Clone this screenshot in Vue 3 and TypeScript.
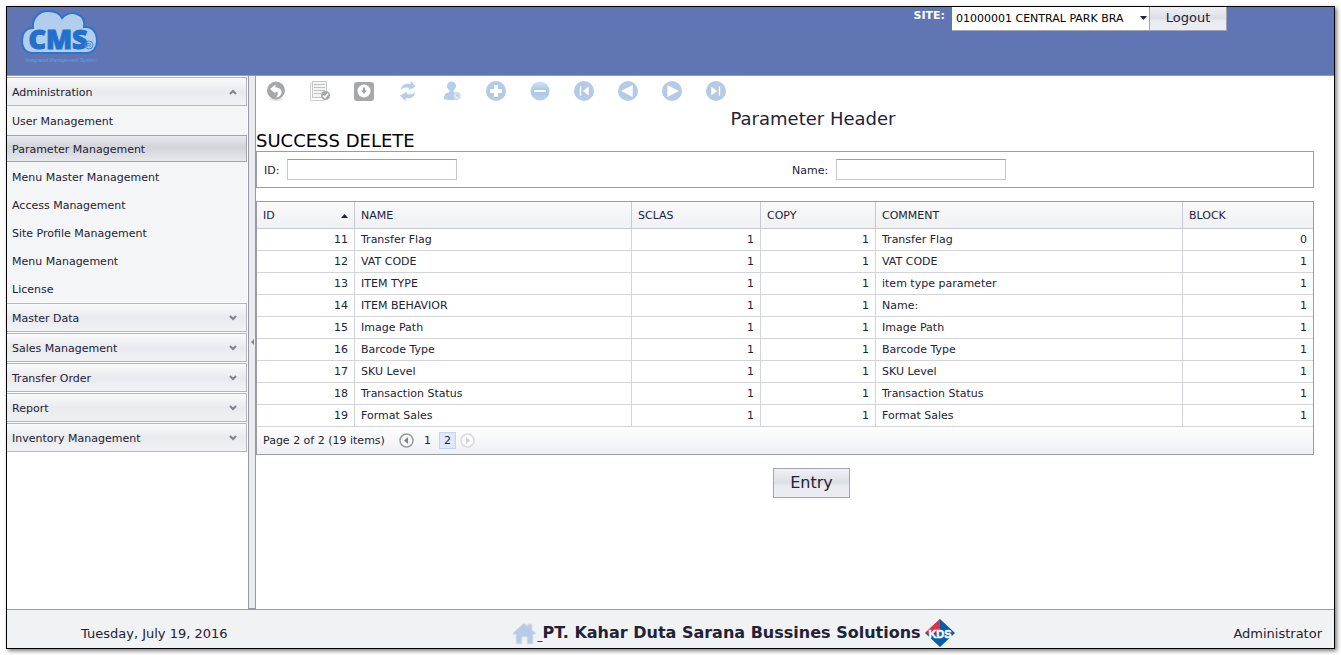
<script setup lang="ts">
import { ref } from 'vue'

interface ParameterRow {
  id: number
  name: string
  sclas: number
  copy: number
  comment: string
  block: number
}

const adminItems: string[] = [
  'User Management',
  'Parameter Management',
  'Menu Master Management',
  'Access Management',
  'Site Profile Management',
  'Menu Management',
  'License',
]
const groups: string[] = ['Master Data', 'Sales Management', 'Transfer Order', 'Report', 'Inventory Management']
const activeItem = ref('Parameter Management')
const idFilter = ref('')
const nameFilter = ref('')
const site = ref('01000001 CENTRAL PARK BRA')

const rows: ParameterRow[] = [
  { id: 11, name: 'Transfer Flag', sclas: 1, copy: 1, comment: 'Transfer Flag', block: 0 },
  { id: 12, name: 'VAT CODE', sclas: 1, copy: 1, comment: 'VAT CODE', block: 1 },
  { id: 13, name: 'ITEM TYPE', sclas: 1, copy: 1, comment: 'item type parameter', block: 1 },
  { id: 14, name: 'ITEM BEHAVIOR', sclas: 1, copy: 1, comment: 'Name:', block: 1 },
  { id: 15, name: 'Image Path', sclas: 1, copy: 1, comment: 'Image Path', block: 1 },
  { id: 16, name: 'Barcode Type', sclas: 1, copy: 1, comment: 'Barcode Type', block: 1 },
  { id: 17, name: 'SKU Level', sclas: 1, copy: 1, comment: 'SKU Level', block: 1 },
  { id: 18, name: 'Transaction Status', sclas: 1, copy: 1, comment: 'Transaction Status', block: 1 },
  { id: 19, name: 'Format Sales', sclas: 1, copy: 1, comment: 'Format Sales', block: 1 },
]
</script>

<template>
  <div class="page">
    <div class="frame">
      <header class="top">
        <svg class="logo" width="80" height="56" viewBox="0 0 80 56" role="img" aria-label="CMS">
          <path
            d="M12 44 C4 44 1 38 1 31 C1 24 5 19 12 19 C11 9 18 2 27 2 C34 2 39 5 41 9 C45 5 51 3 56 5 C62 7 64 12 63 18 C71 17 76 23 76 32 C76 39 72 44 65 44 Z"
            fill="#b3cdec" stroke="#2a76cb" stroke-width="2" />
          <text class="logo-name" x="37" y="40" text-anchor="middle">CMS</text>
          <circle cx="68" cy="36" r="4" fill="none" stroke="#4385cf" />
          <text class="logo-mark" x="68" y="38" text-anchor="middle">R</text>
          <text class="logo-line" x="40" y="53" text-anchor="middle">Integrated Management System</text>
        </svg>
        <div class="account">
          <label for="site">SITE:</label>
          <span class="site-wrap">
            <select id="site" v-model="site">
              <option>01000001 CENTRAL PARK BRA</option>
            </select>
            <svg class="site-arrow" width="7" height="4" viewBox="0 0 7 4"><path d="M0 0H7L3.5 4Z" fill="#222236" /></svg>
          </span>
          <button type="button" class="btn logout">Logout</button>
        </div>
      </header>

      <div class="body">
        <nav class="side">
          <button type="button" class="group">
            <span>Administration</span>
            <svg width="8" height="6" viewBox="0 0 8 6"><path d="M1 5L4 2L7 5" fill="none" stroke="#82828f" stroke-width="2" /></svg>
          </button>
          <div class="items">
            <a
              v-for="item in adminItems" :key="item" href="#" class="item"
              :class="{ active: item === activeItem }" @click.prevent="activeItem = item"
            >{{ item }}</a>
          </div>
          <button v-for="group in groups" :key="group" type="button" class="group">
            <span>{{ group }}</span>
            <svg width="8" height="6" viewBox="0 0 8 6"><path d="M1 1L4 4L7 1" fill="none" stroke="#82828f" stroke-width="2" /></svg>
          </button>
        </nav>
        <div class="splitter">
          <svg width="3" height="6" viewBox="0 0 3 6"><path d="M3 0V6L0 3Z" fill="#83838f" /></svg>
        </div>

        <main class="main">
          <div class="toolbar">
            <button type="button" aria-label="Back">
              <svg viewBox="0 0 20 20">
                <ellipse cx="10" cy="18" rx="7" ry="2" fill="#e6e6e6" />
                <circle cx="10" cy="9.500" r="9" fill="#a5a7a9" />
                <path d="M4 8L9.500 3.500V6.500C14 6.500 16 9 15.500 12C15 14.500 12.500 16.500 10 16.500C12.500 14 12.500 10.500 9.500 10.500V12.500Z" fill="#fff" />
              </svg>
            </button>
            <button type="button" aria-label="Approve">
              <svg viewBox="0 0 20 20">
                <path d="M2.500 2.500H.500V19.500H14.500V17" fill="none" stroke="#cfd0d1" />
                <path d="M2.500 .500H16.500V16.500H2.500Z" fill="#f4f4f4" stroke="#c5c6c7" />
                <path d="M4 3.500H15M4 6.500H15M4 9.500H15M4 12.500H11" stroke="#c0c1c3" />
                <circle cx="15.500" cy="14.500" r="4.500" fill="#a5a8ab" />
                <path d="M13 14.500L15 16.500L18 12.500" fill="none" stroke="#fff" stroke-width="1.500" />
              </svg>
            </button>
            <button type="button" aria-label="Save">
              <svg viewBox="0 0 20 20">
                <rect y="1" width="20" height="19" rx="3" fill="#a5a7a9" />
                <circle cx="10" cy="10" r="6.500" fill="#fff" />
                <path d="M9 6.500H11V9.500H13L10 13L7 9.500H9Z" fill="#a0a2a4" />
              </svg>
            </button>
            <button type="button" aria-label="Refresh">
              <svg viewBox="0 0 20 20" fill="#b4cdeb">
                <path d="M3 9C3 4 7 2 12.500 3L13 0L17.500 5.500L10.500 9.500L11.500 7C8 6 5 6.500 3 9Z" />
                <path d="M17 11C17 16 13 18 8 17L7.500 20L2 14.500L9.500 10.500L8.500 13C12 14 15 13.500 17 11Z" />
              </svg>
            </button>
            <button type="button" aria-label="User">
              <svg viewBox="0 0 20 20">
                <circle cx="9.500" cy="5" r="4.500" fill="#b5cdea" />
                <path d="M2 18C2 13 4 12 7.500 11V8H11.500V11C16 12 17 14 17 18C13 19.500 6 19.500 2 18Z" fill="#b5cdea" />
                <circle cx="15" cy="15" r="3.500" fill="#dce8f6" stroke="#c4d7ee" />
                <path d="M15 13V15H17" fill="none" stroke="#9bbae0" />
              </svg>
            </button>
            <button type="button" aria-label="Add">
              <svg viewBox="0 0 20 20">
                <circle cx="10" cy="10" r="10" fill="#b2cbea" />
                <path d="M8 4H12V8H16V12H12V16H8V12H4V8H8Z" fill="#fff" />
              </svg>
            </button>
            <button type="button" aria-label="Remove">
              <svg viewBox="0 0 20 20">
                <defs>
                  <linearGradient id="minus" x2="0" y2="1"><stop stop-color="#d0e1f3" /><stop offset=".5" stop-color="#a9c7e9" /><stop offset="1" stop-color="#bbd2ed" /></linearGradient>
                </defs>
                <circle cx="10" cy="10" r="9.500" fill="url(#minus)" />
                <rect x="4" y="9" width="12" height="2" fill="#fff" />
              </svg>
            </button>
            <button type="button" aria-label="First">
              <svg viewBox="0 0 20 20">
                <circle cx="10" cy="10" r="10" fill="#b2cbea" />
                <path d="M5.500 5H7.500V15H5.500ZM15 5V15L8.500 10Z" fill="#fff" stroke="#b8bfc8" stroke-width=".5" />
              </svg>
            </button>
            <button type="button" aria-label="Previous">
              <svg viewBox="0 0 20 20">
                <circle cx="10" cy="10" r="10" fill="#b2cbea" />
                <path d="M15 3.500V16.500L2.500 10Z" fill="#fff" stroke="#b8bfc8" stroke-width=".5" />
              </svg>
            </button>
            <button type="button" aria-label="Next">
              <svg viewBox="0 0 20 20">
                <circle cx="10" cy="10" r="10" fill="#b2cbea" />
                <path d="M5 3.500V16.500L17.500 10Z" fill="#fff" stroke="#b8bfc8" stroke-width=".5" />
              </svg>
            </button>
            <button type="button" aria-label="Last">
              <svg viewBox="0 0 20 20">
                <circle cx="10" cy="10" r="10" fill="#b2cbea" />
                <path d="M14.500 5H12.500V15H14.500ZM5 5V15L11.500 10Z" fill="#fff" stroke="#b8bfc8" stroke-width=".5" />
              </svg>
            </button>
          </div>

          <h1>Parameter Header</h1>
          <p class="message">SUCCESS DELETE</p>

          <form class="filter" @submit.prevent>
            <div><label for="fid">ID:</label><input id="fid" v-model="idFilter" type="text"></div>
            <div><label for="fname">Name:</label><input id="fname" v-model="nameFilter" type="text"></div>
          </form>

          <div class="grid">
            <table>
              <colgroup>
                <col class="c-id"><col class="c-name"><col class="c-sclas"><col class="c-copy"><col><col class="c-block">
              </colgroup>
              <thead>
                <tr>
                  <th scope="col">
                    <span class="sorted">ID
                      <svg width="7" height="4" viewBox="0 0 7 4"><path d="M0 4H7L3.500 0Z" fill="#222236" /></svg>
                    </span>
                  </th>
                  <th scope="col">NAME</th>
                  <th scope="col">SCLAS</th>
                  <th scope="col">COPY</th>
                  <th scope="col">COMMENT</th>
                  <th scope="col">BLOCK</th>
                </tr>
              </thead>
              <tbody>
                <tr v-for="row in rows" :key="row.id">
                  <td class="num">{{ row.id }}</td>
                  <td>{{ row.name }}</td>
                  <td class="num">{{ row.sclas }}</td>
                  <td class="num">{{ row.copy }}</td>
                  <td>{{ row.comment }}</td>
                  <td class="num">{{ row.block }}</td>
                </tr>
              </tbody>
            </table>
            <div class="pager">
              <span class="summary">Page 2 of 2 (19 items)</span>
              <button type="button" aria-label="Previous page">
                <svg width="15" height="15" viewBox="0 0 15 15"><circle cx="7.500" cy="7.500" r="6.500" fill="#f8f8fa" stroke="#9a9aa2" stroke-width="1.500" /><path d="M9 4V11L5 7.500Z" fill="#80808c" /></svg>
              </button>
              <button type="button" class="num-page">1</button>
              <button type="button" class="num-page current">2</button>
              <button type="button" aria-label="Next page" disabled>
                <svg width="15" height="15" viewBox="0 0 15 15"><circle cx="7.500" cy="7.500" r="6.500" fill="#fbfbfc" stroke="#d9d9de" stroke-width="1.500" /><path d="M6 4V11L10 7.500Z" fill="#d0d0d6" /></svg>
              </button>
            </div>
          </div>

          <div class="actions"><button type="button" class="btn entry">Entry</button></div>
        </main>
      </div>

      <footer class="foot">
        <span class="date">Tuesday, July 19, 2016</span>
        <div class="company">
          <a href="#" aria-label="Home">
            <svg width="25" height="24" viewBox="0 0 25 24">
              <path d="M1 12L12 2L16 5V3H20V9L24 12L22 14L21 13V23H15V16H10V23H4V13L2 14Z" fill="#b5cbe9" stroke="#dfe3e8" />
            </svg>
            <span class="gap">&nbsp;</span></a>
          <strong>PT. Kahar Duta Sarana Bussines Solutions</strong>
          <svg class="kds" width="30" height="28" viewBox="0 0 30 28" role="img" aria-label="KDS">
            <path d="M15 0L30 14L15 28L0 14Z" fill="#075da8" />
            <path d="M15 0V14H0Z" fill="#df3446" />
            <text class="kds-text" x="15" y="19" text-anchor="middle">KDS</text>
          </svg>
        </div>
        <span class="user">Administrator</span>
      </footer>
    </div>
  </div>
</template>

<style>
body { margin: 0; background: #fff; }
</style>

<style scoped>
* { box-sizing: border-box; }
.page {
  display: flex;
  min-height: 100vh;
  padding: 6px;
  font: 11px/16px Verdana, "DejaVu Sans", sans-serif;
  color: #222236;
}
.frame {
  flex: 1;
  display: flex;
  flex-direction: column;
  border: 1px solid #000;
  box-shadow: 2px 2px 4px rgba(0, 0, 0, .5);
}
button, input, select { font: inherit; color: inherit; border-radius: 0; }
button { cursor: pointer; }

.top {
  display: flex;
  justify-content: space-between;
  align-items: flex-start;
  height: 69px;
  padding: 0 107px 0 14px;
  background: #6075b3;
  border-bottom: 1px solid #9a9aa8;
}
.logo { display: block; margin-top: 2px; }
.logo-name { font: 800 27px "Open Sans", "Liberation Sans", sans-serif; fill: #2370cc; stroke: #2370cc; stroke-width: 1px; }
.logo-mark { font: bold 6px "Liberation Sans", sans-serif; fill: #4385cf; }
.logo-line { font: italic 5px "Liberation Sans", sans-serif; fill: #62a3e8; }
.account { display: flex; align-items: flex-start; }
.account label { margin-right: 7px; color: #fff; font-weight: bold; line-height: 18px; }
.site-wrap { position: relative; display: block; }
.site-wrap select {
  display: block;
  width: 197px;
  height: 24px;
  padding: 0 14px 0 4px;
  border: 0;
  border-bottom: 1px solid #a3a3b1;
  background: #fff;
  color: #000;
  appearance: none;
}
.site-arrow { position: absolute; right: 2px; top: 9px; pointer-events: none; }
.btn {
  padding: 0;
  border: 1px solid #a3a3b1;
  background: linear-gradient(#f0f0f4, #dcdfe5 50%, #ebecf2 60%, #ebecf2);
}
.logout { width: 78px; height: 24px; padding-bottom: 2px; border-top: 0; font-size: 13px; line-height: 20px; }

.body { flex: 1; display: flex; }
.side { width: 241px; padding: 1px 1px 0 0; }
.group {
  display: flex;
  align-items: center;
  justify-content: space-between;
  width: 100%;
  height: 29px;
  margin-bottom: 1px;
  padding: 0 9px 0 5px;
  border: 1px solid #b4b6be;
  border-left: 0;
  background: linear-gradient(#f9fafb, #e9eaee 50%, #f1f2f4);
  text-align: left;
}
.group span { padding-top: 2px; }
.items { margin-top: -1px; padding-top: 1px; background: #f3f5f7; }
.item {
  display: block;
  height: 27px;
  margin-bottom: 1px;
  padding: 5px 5px 0;
  border: 0 solid transparent;
  border-width: 1px 1px 1px 0;
  line-height: 18px;
  color: inherit;
  text-decoration: none;
}
.active { border-color: #a3a4af; background: linear-gradient(#e8e9ed, #d2d4da 45%, #e7e8ec); }
.splitter {
  display: flex;
  align-items: center;
  justify-content: center;
  width: 8px;
  border: 1px solid #9a9aa6;
  border-top: 0;
  background: #ebecf0;
}

.main { flex: 1; min-width: 0; padding-right: 20px; }
.toolbar { display: flex; gap: 24px; padding: 5px 0 0 10px; }
.toolbar button { width: 20px; height: 20px; padding: 0; border: 0; background: none; }
.toolbar svg { display: block; width: 20px; height: 20px; }
h1 { margin: 6px 0 0; padding-left: 56px; font-size: 18px; font-weight: normal; line-height: 24px; text-align: center; }
.message { margin: 0; color: #000; font-size: 18px; line-height: 20px; }
.filter {
  display: grid;
  grid-template-columns: 1fr 1fr;
  padding: 7px 0;
  border: 1px solid #9c9ba8;
}
.filter div { display: flex; align-items: center; gap: 8px; padding-left: 7px; }
.filter label { padding-top: 2px; }
.filter input { width: 170px; height: 21px; padding: 0 4px; border: 1px solid #c6c6ce; border-top-color: #9c9ba8; outline: none; }
.grid { margin-top: 13px; border: 1px solid #9c9ba8; }
table { width: 100%; table-layout: fixed; border-collapse: separate; border-spacing: 0; }
.c-id { width: 98px; }
.c-name { width: 277px; }
.c-sclas { width: 129px; }
.c-copy { width: 115px; }
.c-block { width: 130px; }
th, td { border: 0 solid #d3d4da; border-width: 0 1px 1px 0; text-align: left; font-weight: normal; }
th { height: 27px; padding: 2px 6px 0; border-color: #c8c9d0; background: linear-gradient(#f9f9fa, #f0f1f3); }
td { height: 22px; padding: 1px 6px 0; line-height: 20px; }
th:last-child, td:last-child { border-right: 0; }
td.num { text-align: right; }
.sorted { display: flex; align-items: center; justify-content: space-between; }
.pager { display: flex; align-items: center; height: 27px; padding: 0 6px; background: linear-gradient(#fefefe, #eff0f5); }
.pager button { padding: 0; border: 1px solid transparent; background: none; }
.pager svg { display: block; }
.summary { margin-right: 13px; }
.pager .num-page { width: 17px; height: 17px; margin-left: 4px; line-height: 15px; }
.pager .current { margin: 0 3px; border-color: #c4d2f5; background: #e0e8fb; }
.actions { padding: 13px 0 0 53px; text-align: center; }
.entry { width: 77px; height: 30px; font-size: 16px; }

.foot {
  display: grid;
  grid-template-columns: 1fr auto 1fr;
  align-items: center;
  height: 39px;
  padding: 8px 12px 0 74px;
  border-top: 1px solid #9a9aa8;
  background: #f1f2f4;
  font-size: 13px;
}
.date, .user { padding-top: 2px; }
.company { display: flex; align-items: center; padding-left: 64px; }
.company a { display: flex; align-items: center; color: #32327a; font-size: 16px; text-decoration: none; }
.company a .gap { text-decoration: underline; text-underline-offset: 3px; }
.company strong { font-size: 16px; line-height: 24px; }
.kds { margin-left: 4px; }
.kds-text { font: bold 11px "Liberation Sans", sans-serif; fill: #fff; stroke: #fff; stroke-width: .5px; }
.user { text-align: right; }
</style>
